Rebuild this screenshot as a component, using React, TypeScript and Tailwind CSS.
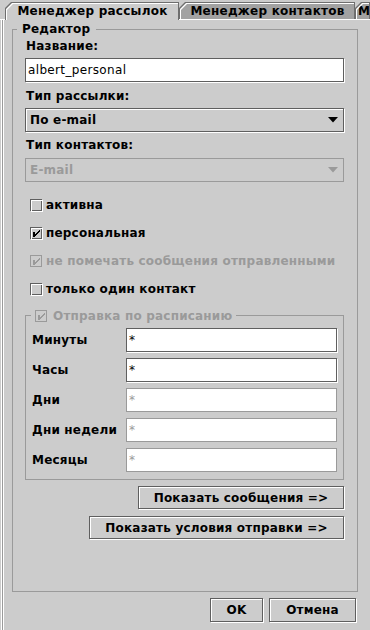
import React from 'react';

const CLIP = "[clip-path:polygon(6px_0,100%_0,100%_100%,0_100%,0_6px)]";

function Tab({ label, selected, w, start }: { label: string; selected?: boolean; w: string; start?: boolean }) {
  return (
    <div
      className={`${w} shrink-0 ${selected ? 'h-[18px] -mb-px relative z-10' : 'h-[17px]'} bg-[#6e6e6e] pt-[1px] pl-[1px] pr-[1px] ${CLIP}`}
    >
      <div className={`h-full bg-white pt-[1px] pl-[1px] ${CLIP}`}>
        <div
          className={`h-full ${selected ? 'bg-[#cccccc]' : 'bg-[#a2a2a2]'} ${CLIP} font-bold tracking-[0.25px] whitespace-nowrap overflow-hidden flex ${start ? 'justify-start pl-[1px]' : 'justify-center'}`}
        >
          {label}
        </div>
      </div>
    </div>
  );
}

function CheckBox({ checked, disabled }: { checked?: boolean; disabled?: boolean }) {
  const mark = disabled ? '#9a9a9a' : '#000';
  return (
    <svg width="13" height="13" viewBox="0 0 13 13" shapeRendering="crispEdges" className="shrink-0">
      {disabled ? (
        <rect x="0.5" y="0.5" width="11" height="11" fill="none" stroke="#9a9a9a" />
      ) : (
        <>
          <rect x="0.5" y="0.5" width="11" height="11" fill="none" stroke="#5f5f5f" />
          <rect x="1.5" y="1.5" width="11" height="11" fill="none" stroke="#ffffff" />
        </>
      )}
      {checked && (
        <path
          d="M3 5h2v5h-2z M9 3h1v2h-1z M8 4h1v2h-1z M7 5h1v2h-1z M6 6h1v2h-1z M5 7h1v2h-1z"
          fill={mark}
        />
      )}
    </svg>
  );
}

function Arrow({ color }: { color: string }) {
  return (
    <svg width="10" height="6" viewBox="0 0 10 6" className="shrink-0">
      <polygon points="0,0 10,0 5,5.5" fill={color} />
    </svg>
  );
}

function CheckRow({ label, checked, disabled }: { label: string; checked?: boolean; disabled?: boolean }) {
  return (
    <div className={`h-[28px] flex items-center pl-[5px] gap-[3px] font-bold ${disabled ? 'text-[#9a9a9a]' : ''}`}>
      <CheckBox checked={checked} disabled={disabled} />
      <span>{label}</span>
    </div>
  );
}

function SchedRow({ label, disabled }: { label: string; disabled?: boolean }) {
  return (
    <div className="flex items-center h-[24px]">
      <div className="w-[94px] font-bold">{label}</div>
      <div
        className={`w-[211px] h-[24px] bg-white flex items-center pl-[2px] font-normal tracking-normal ${
          disabled ? 'border border-[#9a9a9a] text-[#9a9a9a]' : 'border border-[#5f5f5f] shadow-[1px_1px_0_#fff]'
        }`}
      >
        *
      </div>
    </div>
  );
}

function Btn({ children, className }: { children: React.ReactNode; className: string }) {
  return (
    <div
      className={`${className} border border-[#5f5f5f] shadow-[inset_1px_1px_0_#fff,1px_1px_0_#fff] flex items-center justify-center font-bold whitespace-nowrap`}
    >
      {children}
    </div>
  );
}

export default function App() {
  return (
    <div className="w-[370px] h-[630px] overflow-hidden bg-[#cccccc] font-['DejaVu_Sans',sans-serif] text-[12px] leading-[14px] tracking-[0.2px] text-black flex flex-col">
      <div className="flex items-end h-[20px] border-b border-white pl-[5px] shrink-0">
        <Tab label="Менеджер рассылок" selected w="w-[174px]" />
        <Tab label="Менеджер контактов" w="w-[176px]" />
        <Tab label="М" w="w-[15px]" start />
      </div>

      <div className="flex flex-1">
        <div className="ml-[1px] w-[3px] border-x border-white bg-[#9a9a9a]" />
        <div className="ml-[8px] w-[346px] flex flex-col">
          <div className="relative mt-[9px] h-[563px] border border-[#9a9a9a] pt-[9px] pl-[12px]">
            <div className="absolute -top-[8px] left-[4px] pl-[5px] pr-[6px] bg-[#cccccc] font-bold">Редактор</div>
            <div className="w-[319px] flex flex-col">
              <div className="ml-[1px] font-bold">Название:</div>
              <div className="mt-[5px] h-[24px] bg-white border border-[#5f5f5f] shadow-[1px_1px_0_#fff] pl-[2px] flex items-center tracking-[0.35px]">
                albert_personal
              </div>
              <div className="ml-[1px] mt-[7px] font-bold">Тип рассылки:</div>
              <div className="mt-[5px] h-[24px] border border-[#5f5f5f] shadow-[inset_1px_1px_0_#fff,1px_1px_0_#fff] flex items-center justify-between pl-[4px] pr-[5px] font-bold">
                <span>По e-mail</span>
                <Arrow color="#000" />
              </div>
              <div className="ml-[1px] mt-[6px] font-bold">Тип контактов:</div>
              <div className="mt-[6px] h-[24px] border border-[#9a9a9a] flex items-center justify-between pl-[4px] pr-[5px] font-bold text-[#9a9a9a]">
                <span>E-mail</span>
                <Arrow color="#9a9a9a" />
              </div>

              <div className="mt-[9px] flex flex-col">
                <CheckRow label="активна" />
                <CheckRow label="персональная" checked />
                <CheckRow label="не помечать сообщения отправленными" checked disabled />
                <CheckRow label="только один контакт" />
              </div>

              <div className="relative mt-[12px] h-[165px] border border-[#9a9a9a] pt-[12px] pl-[6px] flex flex-col gap-[6px]">
                <div className="absolute -top-[7px] left-[5px] pl-[4px] pr-[4px] bg-[#cccccc] flex items-center gap-[5px] font-bold text-[#9a9a9a]">
                  <CheckBox checked disabled />
                  <span>Отправка по расписанию</span>
                </div>
                <SchedRow label="Минуты" />
                <SchedRow label="Часы" />
                <SchedRow label="Дни" disabled />
                <SchedRow label="Дни недели" disabled />
                <SchedRow label="Месяцы" disabled />
              </div>

              <Btn className="self-end mt-[6px] w-[206px] h-[23px]">Показать сообщения =&gt;</Btn>
              <Btn className="self-end mt-[7px] w-[255px] h-[23px]">Показать условия отправки =&gt;</Btn>
            </div>
          </div>

          <div className="flex justify-end gap-[6px] mt-[6px] pr-[2px]">
            <Btn className="w-[53px] h-[24px]">OK</Btn>
            <Btn className="w-[87px] h-[24px]">Отмена</Btn>
          </div>
        </div>
      </div>
    </div>
  );
}
